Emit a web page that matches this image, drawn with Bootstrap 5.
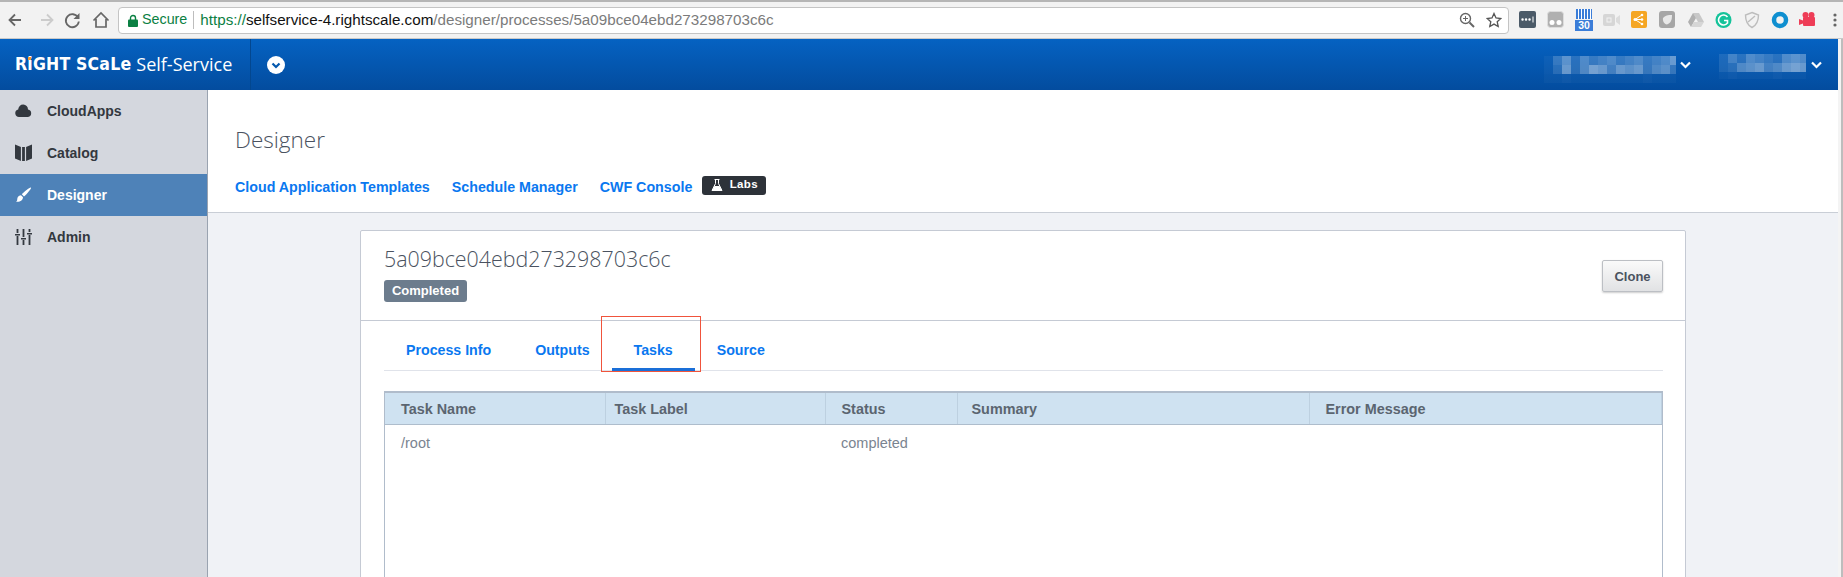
<!DOCTYPE html>
<html lang="en">
<head>
  <meta charset="UTF-8" />
  <meta name="viewport" content="width=device-width, initial-scale=1.0"/>
  <title>Designer - RightScale Self-Service</title>
  <link href="https://cdn.jsdelivr.net/npm/bootstrap@5.3.0/dist/css/bootstrap.min.css" rel="stylesheet" />
  <style>
    html, body { height: 577px; overflow: hidden; }
    body { font-family: "Liberation Sans", Arial, sans-serif; font-size: 14px; background: #fff; color: #4a5260; }

    /* browser chrome */
    .chrome-bar { height: 39px; background: #f2f2f2; border-top: 2px solid #b5b5b5; border-bottom: 1px solid #c9c9c9; padding-left: 3px; }
    .chrome-btn { width: 28px; height: 24px; flex: none; }
    .url-box { width: 1391px; height: 27px; margin-left: 3px; background: #fff; border: 1px solid #c4c4c4; border-radius: 4px; padding: 0 6px 0 9px; font-size: 14.3px; white-space: nowrap; }
    .url-secure { color: #0b8043; }
    .url-sep { width: 1px; height: 18px; background: #bdbdbd; margin: 0 6px 0 6px; }
    .url-text { font-size: 15.2px; }
    .url-scheme { color: #0b8043; }
    .url-host { color: #111; }
    .url-path { color: #7b7b7b; }
    .star-icon { margin-left: 11px; }
    .ext-row { margin-left: 10px; gap: 10px; }
    .ext-icon { width: 18px; height: 18px; flex: none; }
    .ext-cal { width: 18px; height: 22px; flex: none; position: relative; }
    .ext-cal-num { position: absolute; left: 0; right: 0; bottom: 0; height: 11px; background: #3b7dd8; color: #fff; font-size: 10.5px; font-weight: 700; line-height: 11px; text-align: center; }
    .ext-cal-top { height: 10px; background: repeating-linear-gradient(90deg, #3b7dd8 0 2px, #fff 2px 3px); margin: 0 1px; }
    .ext-more { margin-left: 6px; }

    /* app frame */
    .app-wrap { height: 538px; }
    .scroll-strip { width: 5px; flex: none; background: #f4f4f4; border-right: 2px solid #bdbdbd; }
    .app-main { min-width: 0; }
    .top-bar { height: 51px; background: linear-gradient(#0562c2, #034c9e); color: #fff; flex: none; }
    .brand-box { width: 251px; height: 100%; border-right: 1px solid #03478f; padding-left: 15px; gap: 5px; }
    .brand-logo { font-family: "DejaVu Sans", sans-serif; font-stretch: condensed; font-weight: 700; font-size: 17.5px; letter-spacing: .2px; position: relative; white-space: nowrap; }
    .brand-dot { position: absolute; left: 13px; top: 6px; width: 3px; height: 3px; background: #f29a2e; }
    .brand-name { font-family: "Open Sans", sans-serif; font-weight: 400; font-size: 18px; white-space: nowrap; }
    .user-one { position: absolute; left: 1544px; top: 56px; }
    .user-two { position: absolute; left: 1719px; top: 54px; }
    .user-caret { position: absolute; top: 61px; }

    /* sidebar */
    .side-nav { width: 208px; flex: none; background: #d4d7de; border-right: 1px solid #9aa3b0; }
    .side-link { height: 42px; padding-left: 15px; gap: 15px; color: #33383f; font-weight: 700; font-size: 14px; text-decoration: none; }
    .side-link.active-item { background: #4e82b8; color: #fff; }
    .side-icon { width: 17px; height: 18px; flex: none; }

    /* page */
    .page-head { height: 123px; border-bottom: 1px solid #c9ced6; padding: 35px 0 0 27px; flex: none; background: #fff; }
    .page-title { font-family: "Open Sans", sans-serif; font-weight: 300; font-size: 22.5px; line-height: 30px; color: #4a5260; margin: 0 0 22px; }
    .head-link { color: #0a78f0; font-weight: 700; font-size: 14.25px; line-height: 20px; text-decoration: none; }
    .head-links { gap: 22px; }
    .labs-tag { background: #2d3239; color: #fff; font-size: 11.5px; font-weight: 700; height: 19px; width: 64px; border-radius: 3px; margin: -4px 0 0 -12px; gap: 7px; letter-spacing: .3px; }
    .page-body { background: #f0f2f6; padding: 17px 0 0 152px; flex: 1; min-height: 0; overflow: hidden; }
    .process-card { width: 1326px; border: 1px solid #c5cad4; border-radius: 2px; background: #fff; height: 500px; position: relative; }
    .process-head { height: 90px; padding: 13px 22px 0 23px; border-bottom: 1px solid #c5cad4; }
    .process-id { font-family: "Open Sans", sans-serif; font-weight: 300; font-size: 21.4px; line-height: 30px; color: #4a5260; margin: 0 0 6px; }
    .status-tag { background: #6c7c8d; color: #fff; font-size: 13px; font-weight: 700; width: 83px; height: 22px; border-radius: 3px; }
    .clone-btn { width: 61px; height: 32px; margin-top: 16px; padding: 1px 0 0; font-size: 13px; font-weight: 700; color: #4a5260; background: linear-gradient(#fafafa, #e1e2e4); border: 1px solid #bcbfc4; border-radius: 2px; box-shadow: 0 1px 2px rgba(0,0,0,.2); }
    .tab-row { margin: 0 22px 0 23px; height: 50px; border-bottom: 1px solid #e0e3ea; }
    .tab-link { padding: 19px 22px 0; height: 50px; line-height: 20px; color: #0a78f0; font-weight: 700; font-size: 14.2px; }
    .tab-link:hover { color: #0a78f0; }
    .tab-link.active { box-shadow: inset 0 -3px 0 #1a6fd8; }
    .red-box { position: absolute; left: 240px; top: 85px; width: 100px; height: 56px; border: 1px solid #f0543c; pointer-events: none; }
    .grid-box { margin: 20px 22px 0 23px; height: 300px; border: 1px solid #b0bccb; border-top-width: 2px; }
    .grid-table { table-layout: fixed; width: 100%; margin: 0; --bs-table-bg: transparent; }
    .grid-table th { background: #cfe2f1; color: #5b6570; font-weight: 700; font-size: 14.4px; height: 31px; padding: 4px 0 0 16px; border-right: 1px solid #bdd0e0; border-bottom: 1px solid #aebdcc; vertical-align: middle; }
    .grid-table th:nth-child(2) { padding-left: 9px; }
    .grid-table th:nth-child(4) { padding-left: 14px; }
    .grid-table td { color: #7a8490; font-size: 14.5px; border: 0; height: 38px; padding: 2px 0 0 16px; vertical-align: middle; }
    .col-a { width: 220px; }
    .col-b { width: 220px; }
    .col-c { width: 132px; }
    .col-d { width: 352px; }
  </style>
</head>
<body>

  <!-- Barra del navegador -->
  <div class="chrome-bar d-flex align-items-center">
    <svg class="chrome-btn" viewBox="0 0 28 24"><path d="M18 12H7M12 6.500 6.500 12l5.500 5.500" fill="none" stroke="#666" stroke-width="1.800"/></svg>
    <svg class="chrome-btn" viewBox="0 0 28 24"><path d="M10 12h11M16 6.500l5.500 5.500-5.500 5.500" fill="none" stroke="#ccc" stroke-width="1.800"/></svg>
    <svg class="chrome-btn" viewBox="0 0 28 24"><path d="M19 9.500a6.500 6.500 0 1 0 .8 4" fill="none" stroke="#666" stroke-width="1.800"/><path d="M20.500 5v6h-6z" fill="#666"/></svg>
    <svg class="chrome-btn" viewBox="0 0 28 24"><path d="M6.500 12.500 14 5l7.500 7.500M9 11v8h10v-8" fill="none" stroke="#666" stroke-width="1.700"/></svg>
    <div class="url-box d-flex align-items-center">
      <svg width="10" height="13" viewBox="0 0 10 13" class="me-1 flex-none"><path d="M2.500 6V4a2.500 2.500 0 0 1 5 0v2" fill="none" stroke="#0b8043" stroke-width="1.400"/><rect y="5.500" width="10" height="7.500" rx="1" fill="#0b8043"/></svg>
      <span class="url-secure">Secure</span>
      <span class="url-sep"></span>
      <span class="url-text"><span class="url-scheme">https://</span><span class="url-host">selfservice-4.rightscale.com</span><span class="url-path">/designer/processes/5a09bce04ebd273298703c6c</span></span>
      <svg width="16" height="16" viewBox="0 0 16 16" class="ms-auto"><circle cx="6.500" cy="6.500" r="5" fill="none" stroke="#666" stroke-width="1.400"/><path d="M10.500 10.500 15 15" stroke="#666" stroke-width="2"/><path d="M4 6.500h5M6.500 4v5" stroke="#666"/></svg>
      <svg width="16" height="16" viewBox="0 0 16 16" class="star-icon"><path d="m8 1.500 2 4.500 4.800.5-3.600 3.200 1 4.800L8 12.100 3.800 14.500l1-4.800L1.200 6.500 6 6z" fill="none" stroke="#555" stroke-width="1.300"/></svg>
    </div>
    <div class="ext-row d-flex align-items-center">
      <svg class="ext-icon" viewBox="0 0 18 18"><rect width="17" height="17" rx="2" fill="#4b5a68"/><path d="M3.500 8.500h.1M7 8.500h.1M10.500 8.500h.1" stroke="#fff" stroke-width="2.400" stroke-linecap="round"/><path d="M14 5.500v6" stroke="#fff"/></svg>
      <svg class="ext-icon" viewBox="0 0 18 18"><rect x=".5" y=".5" width="16" height="16" rx="3" fill="#b0b0b0" stroke="#ddd"/><circle cx="5" cy="11.500" r="2.500" fill="#fff"/><circle cx="12" cy="11.500" r="2.500" fill="#fff"/></svg>
      <div class="ext-cal"><div class="ext-cal-top"></div><div class="ext-cal-num">30</div></div>
      <svg class="ext-icon" viewBox="0 0 18 18"><rect y="3" width="12" height="12" rx="2" fill="#d6d6d6"/><path d="m13 7 4-3v10l-4-3z" fill="#dcdcdc"/><rect x="4" y="7" width="4" height="4" fill="none" stroke="#f2f2f2"/></svg>
      <svg class="ext-icon" viewBox="0 0 18 18"><rect width="16" height="17" rx="2" fill="#f5a623"/><path d="M4 8.500 11 4M4 8.500l7 4.500M4 8.500h7" stroke="#fff"/><circle cx="4" cy="8.500" r="1.500" fill="#fff"/><circle cx="11" cy="4" r="1.300" fill="#fff"/><circle cx="11" cy="13" r="1.300" fill="#fff"/><circle cx="11" cy="8.500" r="1.300" fill="#fff"/></svg>
      <svg class="ext-icon" viewBox="0 0 18 18"><rect width="16" height="17" rx="3" fill="#a6a6a6"/><path d="M4 7c2-2.500 5-3 9-3 0 5-1 8-5 9.500C5 13 3.500 10 4 7z" fill="#e8e8e8"/></svg>
      <svg class="ext-icon" viewBox="0 0 18 18"><path d="M6 2h6l5 9h-6z" fill="#c8c8c8"/><path d="M6 2 1 11l3 5 5-9z" fill="#b0b0b0"/><path d="M4 16h10l3-5H7z" fill="#d6d6d6"/></svg>
      <svg class="ext-icon" viewBox="0 0 18 18"><circle cx="8.500" cy="9" r="8" fill="#15c39a"/><path d="M12.500 6a5 5 0 1 0 0 6V9.500H9" fill="none" stroke="#fff" stroke-width="1.600"/></svg>
      <svg class="ext-icon" viewBox="0 0 18 18"><path d="M9 1.500 15.500 4c0 6-1.500 10-6.500 12.500C4 14 2.500 10 2.500 4z" fill="none" stroke="#bdbdbd" stroke-width="1.400"/><path d="M5 11 12 5" stroke="#bdbdbd" stroke-width="1.400"/></svg>
      <svg class="ext-icon" viewBox="0 0 18 18"><circle cx="9" cy="9" r="6" fill="none" stroke="#0f8fd0" stroke-width="4.500"/></svg>
      <svg class="ext-icon" viewBox="0 0 18 18"><circle cx="6.500" cy="4" r="3" fill="#ee3d57"/><circle cx="12.500" cy="4" r="3" fill="#ee3d57"/><rect x="4" y="6" width="12" height="9" rx="1" fill="#ee3d57"/><path d="M0 8l4 1.500v3L0 14z" fill="#ee3d57"/></svg>
      <svg width="4" height="14" viewBox="0 0 4 14" class="ext-more flex-none"><circle cx="2" cy="2" r="1.600" fill="#666"/><circle cx="2" cy="7" r="1.600" fill="#666"/><circle cx="2" cy="12" r="1.600" fill="#666"/></svg>
    </div>
  </div>

  <div class="app-wrap d-flex">
    <div class="app-main flex-grow-1 d-flex flex-column">

      <!-- Barra superior -->
      <div class="top-bar d-flex align-items-center">
        <div class="brand-box d-flex align-items-center">
          <span class="brand-logo">RiGHT SCaLe<span class="brand-dot"></span></span>
          <span class="brand-name">Self-Service</span>
        </div>
        <svg width="18" height="18" viewBox="0 0 18 18" class="ms-3"><circle cx="9" cy="9" r="9" fill="#fff"/><path d="m5.500 7.500 3.500 3.500 3.500-3.500" fill="none" stroke="#0458ae" stroke-width="2.200"/></svg>
      </div>

      <div class="d-flex flex-grow-1" style="min-height:0">
        <!-- Menu lateral -->
        <nav class="side-nav d-flex flex-column">
          <a class="side-link d-flex align-items-center" href="#">
            <svg class="side-icon" viewBox="0 0 17 18"><path d="M4 15a3.800 3.800 0 0 1-.8-7.500A5 5 0 0 1 8.300 2.500a5 5 0 0 1 4.700 5 3.800 3.800 0 0 1 0 7.500z" fill="#33383f"/></svg>
            CloudApps
          </a>
          <a class="side-link d-flex align-items-center" href="#">
            <svg class="side-icon" viewBox="0 0 17 18"><path d="M0 .5 6 3h5l6-2.500v14L11 17H6L0 14.500z" fill="#33383f"/><path d="M6.500 3v14M10.500 3v14" stroke="#d4d7de" stroke-width="1.200"/></svg>
            Catalog
          </a>
          <a class="side-link active-item d-flex align-items-center" href="#">
            <svg class="side-icon" viewBox="0 0 17 18"><path d="M16 1.500c.8.800-4 6.500-7 9L6.800 8.300c2.500-3 8.400-7.600 9.200-6.800zM6 9.300l2 2c0 2.500-2.500 5-7 4.500 1.500-1 1-2 1.500-4 .5-1.500 2-2.500 3.500-2.500z" fill="#fff"/></svg>
            Designer
          </a>
          <a class="side-link d-flex align-items-center" href="#">
            <svg class="side-icon" viewBox="0 0 17 18"><path d="M2.500 1v4M2.500 8v9M8.500 1v8M8.500 12v5M14.500 1v3M14.500 7v10" stroke="#33383f" stroke-width="1.800"/><path d="M0 6h5v1.500H0zM6 10h5v1.500H6zM12 5h5v1.500h-5z" fill="#33383f"/></svg>
            Admin
          </a>
        </nav>

        <div class="flex-grow-1 d-flex flex-column" style="min-width:0">
          <!-- Cabecera -->
          <div class="page-head">
            <h1 class="page-title">Designer</h1>
            <div class="head-links d-flex align-items-center">
              <a class="head-link" href="#">Cloud Application Templates</a>
              <a class="head-link" href="#">Schedule Manager</a>
              <a class="head-link" href="#">CWF Console</a>
              <span class="labs-tag d-inline-flex align-items-center justify-content-center">
                <svg width="12" height="12" viewBox="0 0 12 12"><path d="M3.500.5h5M4.500.5v4L1 11.500h10L7.500 4.500v-4" fill="none" stroke="#fff"/><path d="M3.500 7h5l2.500 4.500H1z" fill="#fff"/></svg>
                Labs
              </span>
            </div>
          </div>

          <!-- Proceso -->
          <div class="page-body">
            <div class="process-card">
              <div class="process-head d-flex justify-content-between">
                <div>
                  <h2 class="process-id">5a09bce04ebd273298703c6c</h2>
                  <span class="status-tag d-inline-flex align-items-center justify-content-center">Completed</span>
                </div>
                <button type="button" class="btn clone-btn">Clone</button>
              </div>
              <ul class="nav tab-row">
                <li class="nav-item"><a class="nav-link tab-link" href="#">Process Info</a></li>
                <li class="nav-item"><a class="nav-link tab-link" href="#">Outputs</a></li>
                <li class="nav-item"><a class="nav-link tab-link active" href="#">Tasks</a></li>
                <li class="nav-item"><a class="nav-link tab-link" href="#">Source</a></li>
              </ul>
              <div class="red-box"></div>
              <div class="grid-box">
                <table class="table grid-table">
                  <colgroup><col class="col-a"><col class="col-b"><col class="col-c"><col class="col-d"><col></colgroup>
                  <thead>
                    <tr><th>Task Name</th><th>Task Label</th><th>Status</th><th>Summary</th><th>Error Message</th></tr>
                  </thead>
                  <tbody>
                    <tr><td>/root</td><td></td><td>completed</td><td></td><td></td></tr>
                  </tbody>
                </table>
              </div>
            </div>
          </div>
        </div>
      </div>
    </div>
    <div class="scroll-strip"></div>
  </div>

  <!-- Nombres de usuario pixelados -->
  <svg id="userOne" class="user-one" width="132" height="27"></svg>
  <svg class="user-caret" style="left:1680px" width="11" height="8" viewBox="0 0 11 8"><path d="m1 1.500 4.500 4.500L10 1.500" fill="none" stroke="#fff" stroke-width="2.200"/></svg>
  <svg id="userTwo" class="user-two" width="87" height="25"></svg>
  <svg class="user-caret" style="left:1811px" width="11" height="8" viewBox="0 0 11 8"><path d="m1 1.500 4.500 4.500L10 1.500" fill="none" stroke="#fff" stroke-width="2.200"/></svg>

  <script src="https://cdn.jsdelivr.net/npm/bootstrap@5.3.0/dist/js/bootstrap.bundle.min.js"></script>
  <script>
    // mosaicos: cada numero es la opacidad de un cuadro de 9px
    const mosaics = {
      userOne: [
        [.04, .2, .35, .15, .3, .2, .25, .3, .2, .25, .3, .2, .25, .3, .4],
        [.04, .15, .4, .15, .3, .45, .4, .25, .4, .35, .4, .2, .3, .35, .2],
        [.03, .03, .05, .03, .03, .03, .03, .03, .03, .03, .03, .05, .03, .03, .03]
      ],
      userTwo: [
        [.1, .25, .15, .3, .25, .2, .15, .3, .35, .3],
        [.1, .15, .3, .35, .4, .25, .3, .4, .45, .4],
        [.03, .05, .03, .03, .03, .03, .05, .03, .03, .03]
      ]
    };
    Object.entries(mosaics).forEach(([id, rows]) => {
      const svg = document.getElementById(id);
      rows.forEach((row, y) => row.forEach((alpha, x) => {
        const rect = document.createElementNS('http://www.w3.org/2000/svg', 'rect');
        rect.setAttribute('x', x * 9);
        rect.setAttribute('y', y * 9);
        rect.setAttribute('width', 9);
        rect.setAttribute('height', 9);
        rect.setAttribute('fill', '#fff');
        rect.setAttribute('fill-opacity', alpha);
        svg.appendChild(rect);
      }));
    });
  </script>
</body>
</html>
